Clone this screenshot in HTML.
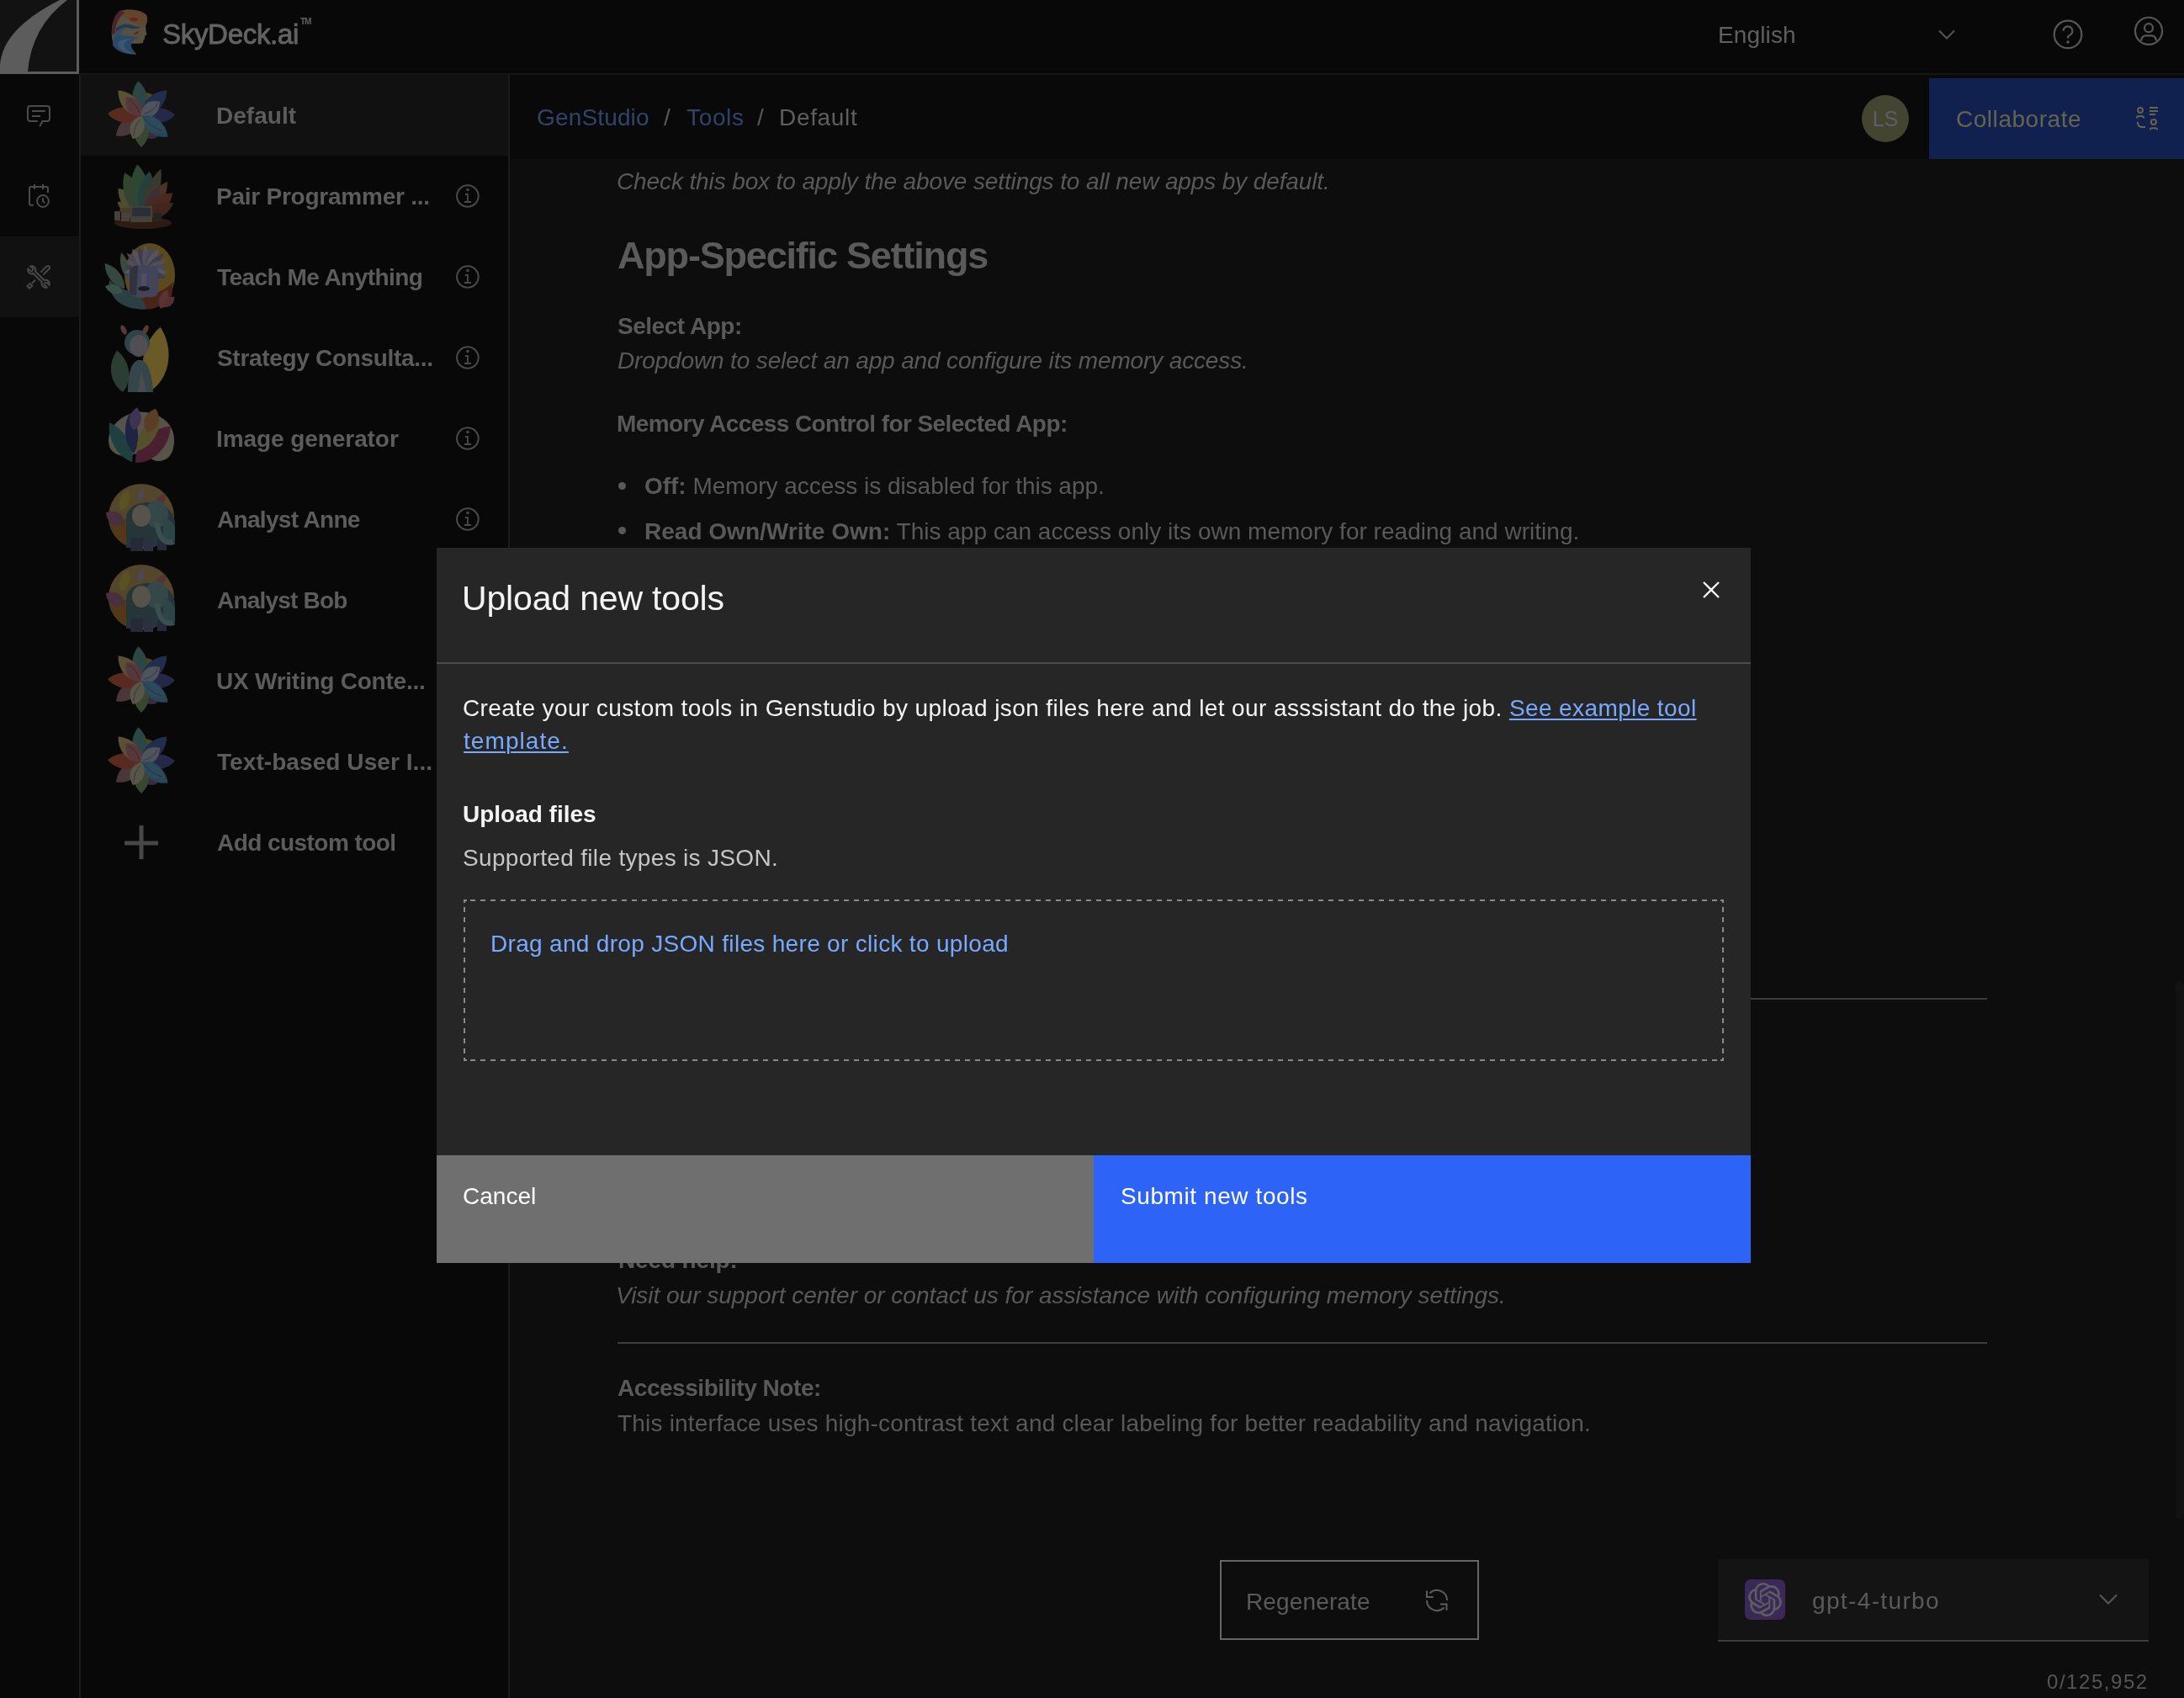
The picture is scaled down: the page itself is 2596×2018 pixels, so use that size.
<!DOCTYPE html>
<html><head><meta charset="utf-8">
<title>SkyDeck.ai - Upload new tools</title>
<style>
html,body{margin:0;padding:0;}
body{width:2596px;height:2018px;overflow:hidden;position:relative;background:#0d0d0d;font-family:"Liberation Sans",sans-serif;}
.a{position:absolute;}
.t{position:absolute;white-space:nowrap;z-index:5;will-change:transform;}
svg{position:absolute;overflow:visible;}
</style></head><body>
<!-- ===== header ===== -->
<div class="a" style="left:0;top:0;width:2596px;height:88px;background:#080808;"></div>
<div class="a" style="left:96px;top:87px;width:2500px;height:2px;background:#161616;z-index:2;"></div>
<!-- top-left box -->
<div class="a" style="left:0;top:0;width:91px;height:85px;background:#121212;border-right:3px solid #5c5c5c;border-bottom:3px solid #5c5c5c;"></div>
<svg style="left:0;top:0" width="94" height="88"><path d="M0,85 Q-3.3,37.6 71,0 L80,0 Q37.6,31.7 33,85 Z" fill="#5c5c5c"/></svg>
<!-- logo -->
<svg style="left:128px;top:8px" width="52" height="60" viewBox="0 0 52 60">
  <path d="M14,5 C24,2 40,3 46,10 C48,14 47,19 45,23 L45.5,28 L46.5,33 L44,35 L44,38 L42.5,40 L42,43 C38,44.5 33,44 28,44 C27,48 31,53 38,56 C26,58 13,54 8,46 C3,38 3,16 14,5 Z" fill="#57503e"/>
  <path d="M18,6 C28,3 40,4 46,10 C47.5,14 47,18 45,22 C41,21 35,21 29,18 C25,15 22,12 15,12 Z" fill="#65442e"/>
  <path d="M14,5 C8,10 4,20 5,33 L9,32 C9,22 12,13 21,6 Z" fill="#4a2428"/>
  <ellipse cx="31" cy="15" rx="5" ry="2" fill="#6a261a"/>
  <path d="M10,26 C16,19 26,20 32,23 C35,24 38,24 40,23 C36,27 30,27 24,25 C18,24 14,27 10,30 Z" fill="#1e3a58"/>
  <path d="M5,37 C8,28 16,26 22,26 C18,30 14,34 10,41 Z" fill="#3e4c5a"/>
  <path d="M6,41 C8,34 14,32 20,34 C26,35 32,36 38,36 C33,38 29,40 28,44 C28,50 32,54 38,56 C24,58 12,54 6,46 Z" fill="#2c4868"/>
  <path d="M12,44 C14,40 20,38 28,38 C22,40 18,44 20,48 C22,52 28,55 32,56 C22,56 14,52 12,44 Z" fill="#3a5870"/>
  <path d="M28,44 C34,43.5 40,44 44,44 L52,44 L52,60 L38,60 C34,56 27,50 28,44 Z" fill="#080808"/>
  <path d="M31,33 C33,30 35,29 37,29 C36,32 34,33 31,33 Z" fill="#6a1a1a"/>
</svg>
<!-- header right icons -->
<svg style="left:2304px;top:35px" width="20" height="12" viewBox="0 0 20 12"><path d="M1,1.5 L10,10.5 L19,1.5" fill="none" stroke="#555" stroke-width="2"/></svg>
<svg style="left:2440px;top:23px" width="36" height="36" viewBox="0 0 36 36">
  <g fill="none" stroke="#575757" stroke-width="2.2">
  <circle cx="18" cy="17.9" r="16.3"/>
  <path d="M12.6,13.8 A5.4,5.4 0 1 1 21.8,17.6 L18,20.5 L18,22.6"/>
  </g>
  <circle cx="18" cy="27" r="1.8" fill="#575757"/>
</svg>
<svg style="left:2536px;top:20px" width="36" height="36" viewBox="0 0 36 36">
  <g fill="none" stroke="#575757" stroke-width="2.2">
  <circle cx="18" cy="16.85" r="16.1"/>
  <circle cx="18" cy="13.2" r="5"/>
  <path d="M9,28.5 C9.5,24.5 11,22.3 14.5,22.3 L21.5,22.3 C25,22.3 26.5,24.5 27,28.5"/>
  </g>
</svg>

<!-- ===== left rail ===== -->
<div class="a" style="left:0;top:88px;width:94px;height:1930px;background:#080808;"></div>
<div class="a" style="left:0;top:281px;width:94px;height:96px;background:#111111;"></div>
<div class="a" style="left:94px;top:88px;width:2px;height:1930px;background:#1b1b1b;"></div>
<!-- chat icon -->
<svg style="left:32px;top:125px" width="29" height="27" viewBox="0 0 29 27">
  <g fill="none" stroke="#4b4b4b" stroke-width="2">
  <path d="M12.8,19 L4,19 Q1,19 1,16 L1,4 Q1,1 4,1 L24,1 Q27,1 27,4 L27,16 Q27,19 24,19 L18.5,19 L15.2,25.3"/>
  <path d="M6,6.9 L21.9,6.9 M6,12.9 L16,12.9"/>
  </g>
</svg>
<!-- calendar icon -->
<svg style="left:34px;top:219px" width="26" height="29" viewBox="0 0 26 29">
  <g fill="none" stroke="#4b4b4b" stroke-width="2">
  <path d="M5.9,24.7 L3,24.7 Q1,24.7 1,22.7 L1,5 Q1,3 3,3 L21,3 Q23,3 23,5 L23,10"/>
  <path d="M7,0 L7,6 M17,0 L17,6"/>
  <circle cx="17" cy="20" r="6.9"/>
  <path d="M17,16.3 L17,20.1 L19.1,22.2"/>
  </g>
</svg>
<!-- tools icon -->
<svg style="left:26px;top:309px" width="40" height="40" viewBox="0 0 40 40">
  <g fill="none" stroke="#474747" stroke-width="2">
  <path transform="translate(11.8,11.8) rotate(45)" d="M-4.15,-2 L-0.8,-2 A2,2 0 0 1 -0.8,2 L-4.15,2 A4.6,4.6 0 0 0 4.25,1.75 L19.05,1.75 A4.6,4.6 0 0 0 27.45,2 L24.1,2 A2,2 0 0 1 24.1,-2 L27.45,-2 A4.6,4.6 0 0 0 19.05,-1.75 L4.25,-1.75 A4.6,4.6 0 0 0 -4.15,-2 Z"/>
  <path d="M22.3,14.6 L29.4,7.5 A2.12,2.12 0 0 1 32.4,10.5 L25.3,17.6"/>
  <path d="M16.2,23.6 L12.0,27.8"/>
  <path d="M9.7,27.9 L12.3,30.5 L9.0,33.6 L6.5,31.0 Z"/>
  </g>
</svg>

<!-- ===== sidebar ===== -->
<div class="a" style="left:96px;top:88px;width:508px;height:1930px;background:#080808;"></div>
<div class="a" style="left:96px;top:88px;width:508px;height:97px;background:#111111;"></div>
<div class="a" style="left:604px;top:88px;width:2px;height:1930px;background:#1b1b1b;"></div>
<svg style="left:128px;top:97px" width="80" height="80" viewBox="0 0 80 80"><circle cx="44" cy="30" r="17" fill="#4e4420"/><circle cx="52" cy="56" r="12" fill="#3a2a3a"/><path d="M0,0 C12,-10.5 12,-29.4 0,-42 C-12,-29.4 -12,-10.5 0,0 Z" fill="#2c4644" transform="translate(40,41) rotate(-5)"/><path d="M0,0 C12,-10.75 12,-30.099999999999998 0,-43 C-12,-30.099999999999998 -12,-10.75 0,0 Z" fill="#222c4c" transform="translate(40,41) rotate(45)"/><path d="M0,0 C12,-10.0 12,-28.0 0,-40 C-12,-28.0 -12,-10.0 0,0 Z" fill="#262848" transform="translate(40,41) rotate(88)"/><path d="M0,0 C12,-10.0 12,-28.0 0,-40 C-12,-28.0 -12,-10.0 0,0 Z" fill="#274656" transform="translate(40,41) rotate(128)"/><path d="M0,0 C12,-9.25 12,-25.9 0,-37 C-12,-25.9 -12,-9.25 0,0 Z" fill="#36492f" transform="translate(40,41) rotate(180)"/><path d="M0,0 C12,-9.5 12,-26.599999999999998 0,-38 C-12,-26.599999999999998 -12,-9.5 0,0 Z" fill="#4a3838" transform="translate(40,41) rotate(232)"/><path d="M0,0 C12,-10.0 12,-28.0 0,-40 C-12,-28.0 -12,-10.0 0,0 Z" fill="#5a2a1e" transform="translate(40,41) rotate(274)"/><path d="M0,0 C12,-10.25 12,-28.7 0,-41 C-12,-28.7 -12,-10.25 0,0 Z" fill="#5a5034" transform="translate(40,41) rotate(318)"/><path d="M0,0 C11,-7.25 11,-20.299999999999997 0,-29 C-11,-20.299999999999997 -11,-7.25 0,0 Z" fill="#55383a" transform="translate(40,41) rotate(322)"/><path d="M0,0 C11,-7.0 11,-19.599999999999998 0,-28 C-11,-19.599999999999998 -11,-7.0 0,0 Z" fill="#4e535c" transform="translate(40,41) rotate(52)"/><path d="M0,0 C11,-8.5 11,-23.799999999999997 0,-34 C-11,-23.799999999999997 -11,-8.5 0,0 Z" fill="#2c4a5c" transform="translate(40,41) rotate(125)"/><path d="M0,0 C11,-7.25 11,-20.299999999999997 0,-29 C-11,-20.299999999999997 -11,-7.25 0,0 Z" fill="#57564a" transform="translate(40,41) rotate(200)"/><g fill="none" stroke="#1c1c1c" stroke-width="0.8" opacity="0.6"><path d="M0,-4 C3,-12 3,-20 0,-25" transform="translate(40,41) rotate(322)"/><path d="M0,-4 C3,-12 3,-20 0,-24" transform="translate(40,41) rotate(52)"/><path d="M0,-4 C3,-12 3,-20 0,-30" transform="translate(40,41) rotate(125)"/><path d="M0,-4 C3,-12 3,-20 0,-25" transform="translate(40,41) rotate(200)"/></g></svg>
<svg style="left:130px;top:193px" width="80" height="80" viewBox="0 0 80 80"><path d="M0,0 C10,-9.0 10,-25.2 0,-36 C-10,-25.2 -10,-9.0 0,0 Z" fill="#4e4a32" transform="translate(40,66) rotate(-58)"/><path d="M0,0 C12,-11.5 12,-32.199999999999996 0,-46 C-12,-32.199999999999996 -12,-11.5 0,0 Z" fill="#4e4c34" transform="translate(40,66) rotate(-40)"/><path d="M0,0 C14,-14.5 14,-40.599999999999994 0,-58 C-14,-40.599999999999994 -14,-14.5 0,0 Z" fill="#34452f" transform="translate(40,66) rotate(-22)"/><path d="M0,0 C15,-16.0 15,-44.8 0,-64 C-15,-44.8 -15,-16.0 0,0 Z" fill="#2e4634" transform="translate(40,66) rotate(-6)"/><path d="M0,0 C13,-14.0 13,-39.199999999999996 0,-56 C-13,-39.199999999999996 -13,-14.0 0,0 Z" fill="#24403a" transform="translate(40,66) rotate(8)"/><path d="M0,0 C10,-15.5 10,-43.4 0,-62 C-10,-43.4 -10,-15.5 0,0 Z" fill="#3a3830" transform="translate(40,66) rotate(20)"/><path d="M0,0 C11,-13.0 11,-36.4 0,-52 C-11,-36.4 -11,-13.0 0,0 Z" fill="#4a3224" transform="translate(40,66) rotate(34)"/><path d="M0,0 C9,-10.5 9,-29.4 0,-42 C-9,-29.4 -9,-10.5 0,0 Z" fill="#3e2e34" transform="translate(40,66) rotate(28)"/><path d="M0,0 C12,-11.5 12,-32.199999999999996 0,-46 C-12,-32.199999999999996 -12,-11.5 0,0 Z" fill="#4a2a20" transform="translate(40,66) rotate(50)"/><path d="M0,0 C11,-10.0 11,-28.0 0,-40 C-11,-28.0 -11,-10.0 0,0 Z" fill="#42261e" transform="translate(40,66) rotate(64)"/><path d="M0,0 C9,-7.5 9,-21.0 0,-30 C-9,-21.0 -9,-7.5 0,0 Z" fill="#4a3a26" transform="translate(40,66) rotate(-70)"/><ellipse cx="40" cy="72" rx="34" ry="7" fill="#2e1c14"/><rect x="25" y="52" width="26" height="19" fill="#44403a"/><rect x="27" y="54" width="22" height="10" fill="#2a2e38"/><rect x="6" y="58" width="7" height="11" fill="#44403a"/><rect x="14" y="60" width="10" height="10" fill="#46423c"/><rect x="53" y="60" width="9" height="10" fill="#242422"/></svg>
<svg style="left:128px;top:289px" width="80" height="80" viewBox="0 0 80 80"><ellipse cx="50" cy="38" rx="30" ry="38" fill="#5a4a1e"/><path d="M18,68 C34,84 60,82 76,64 L78,46 C64,60 40,68 18,68 Z" fill="#4a2418"/><path d="M2,44 C10,52 22,56 34,60 C40,64 44,70 46,78 C30,80 12,74 6,62 C2,56 1,50 2,44 Z" fill="#2a4042"/><path d="M0,0 C9,-9.5 9,-26.599999999999998 0,-38 C-9,-26.599999999999998 -9,-9.5 0,0 Z" fill="#34483e" transform="translate(20,54) rotate(-38)"/><path d="M0,0 C7,-5.5 7,-15.399999999999999 0,-22 C-7,-15.399999999999999 -7,-5.5 0,0 Z" fill="#3a5048" transform="translate(18,58) rotate(-72)"/><path d="M0,0 C6,-8.0 6,-22.4 0,-32 C-6,-22.4 -6,-8.0 0,0 Z" fill="#3a4a3e" transform="translate(24,42) rotate(-14)"/><path d="M0,0 C5,-6.5 5,-18.2 0,-26 C-5,-18.2 -5,-6.5 0,0 Z" fill="#4a4856" transform="translate(45,32) rotate(-112)"/><path d="M0,0 C5,-6.5 5,-18.2 0,-26 C-5,-18.2 -5,-6.5 0,0 Z" fill="#555462" transform="translate(45,32) rotate(-96)"/><path d="M0,0 C5,-6.5 5,-18.2 0,-26 C-5,-18.2 -5,-6.5 0,0 Z" fill="#3e3c4e" transform="translate(45,32) rotate(-80)"/><path d="M0,0 C5,-6.5 5,-18.2 0,-26 C-5,-18.2 -5,-6.5 0,0 Z" fill="#50505c" transform="translate(45,32) rotate(-64)"/><path d="M0,0 C5,-7.5 5,-21.0 0,-30 C-5,-21.0 -5,-7.5 0,0 Z" fill="#4a4856" transform="translate(45,32) rotate(-48)"/><path d="M0,0 C5,-7.5 5,-21.0 0,-30 C-5,-21.0 -5,-7.5 0,0 Z" fill="#555462" transform="translate(45,32) rotate(-32)"/><path d="M0,0 C5,-7.5 5,-21.0 0,-30 C-5,-21.0 -5,-7.5 0,0 Z" fill="#3e3c4e" transform="translate(45,32) rotate(-16)"/><path d="M0,0 C5,-7.5 5,-21.0 0,-30 C-5,-21.0 -5,-7.5 0,0 Z" fill="#50505c" transform="translate(45,32) rotate(0)"/><path d="M0,0 C5,-7.5 5,-21.0 0,-30 C-5,-21.0 -5,-7.5 0,0 Z" fill="#4a4856" transform="translate(45,32) rotate(16)"/><path d="M0,0 C5,-7.5 5,-21.0 0,-30 C-5,-21.0 -5,-7.5 0,0 Z" fill="#555462" transform="translate(45,32) rotate(32)"/><path d="M0,0 C5,-7.5 5,-21.0 0,-30 C-5,-21.0 -5,-7.5 0,0 Z" fill="#3e3c4e" transform="translate(45,32) rotate(48)"/><path d="M0,0 C5,-6.5 5,-18.2 0,-26 C-5,-18.2 -5,-6.5 0,0 Z" fill="#50505c" transform="translate(45,32) rotate(64)"/><path d="M0,0 C5,-6.5 5,-18.2 0,-26 C-5,-18.2 -5,-6.5 0,0 Z" fill="#4a4856" transform="translate(45,32) rotate(80)"/><path d="M0,0 C5,-6.5 5,-18.2 0,-26 C-5,-18.2 -5,-6.5 0,0 Z" fill="#555462" transform="translate(45,32) rotate(96)"/><path d="M0,0 C5,-6.5 5,-18.2 0,-26 C-5,-18.2 -5,-6.5 0,0 Z" fill="#3e3c4e" transform="translate(45,32) rotate(112)"/><path d="M26,32 C26,24 60,24 60,32 L60,56 C60,66 50,64 43,64 C36,64 26,66 26,56 Z" fill="#42445a"/><path d="M26,34 C26,28 34,26 36,27 L34,62 C28,62 26,60 26,56 Z" fill="#30323f"/><rect x="40" y="36" width="6" height="16" fill="#4e5060"/><ellipse cx="43" cy="54" rx="7" ry="3" fill="#1c1c26"/><path d="M0,0 C7,-6.0 7,-16.799999999999997 0,-24 C-7,-16.799999999999997 -7,-6.0 0,0 Z" fill="#5a3432" transform="translate(63,78) rotate(18)"/><path d="M0,0 C6,-4.5 6,-12.6 0,-18 C-6,-12.6 -6,-4.5 0,0 Z" fill="#553030" transform="translate(66,76) rotate(48)"/></svg>
<svg style="left:128px;top:384px" width="80" height="82" viewBox="0 0 80 82"><path d="M0,0 C20,-19.0 20,-53.199999999999996 0,-76 C-20,-53.199999999999996 -20,-19.0 0,0 Z" fill="#6a5a28" transform="translate(52,80) rotate(8)"/><path d="M0,0 C14,-12.5 14,-35.0 0,-50 C-14,-35.0 -14,-12.5 0,0 Z" fill="#2a3e34" transform="translate(18,82) rotate(-8)"/><path d="M24,82 C24,54 30,44 38,44 C46,44 52,54 54,82 Z" fill="#34464a"/><path d="M36,82 L40,56 L46,82 Z" fill="#484c50"/><circle cx="35" cy="23" r="15" fill="#2e4446"/><ellipse cx="37" cy="27" rx="11" ry="13" fill="#4e4e54"/><ellipse cx="19" cy="8" rx="3" ry="6" fill="#5a3a32" transform="rotate(-25 19 8)"/><ellipse cx="45" cy="8" rx="3" ry="6" fill="#5a3a32" transform="rotate(25 45 8)"/></svg>
<svg style="left:128px;top:481px" width="80" height="80" viewBox="0 0 80 80"><path d="M1,42 C1,25 20,8 40,8.5 C62,9 79,22 79,42 C79,58 72,67 60,67 C52,67 50,61 44,59 C38,58 32,58 27,60 C24,61 20,62 14,60 C4,57 1,50 1,42 Z" fill="#57534b"/><path d="M0,0 C12,-13.5 12,-37.8 0,-54 C-12,-37.8 -12,-13.5 0,0 Z" fill="#1e4040" transform="translate(29,68) rotate(-30)"/><path d="M0,0 C10,-12.0 10,-33.599999999999994 0,-48 C-10,-33.599999999999994 -10,-12.0 0,0 Z" fill="#1e2442" transform="translate(31,58) rotate(-6)"/><path d="M0,0 C9,-6.75 9,-18.9 0,-27 C-9,-18.9 -9,-6.75 0,0 Z" fill="#3e3452" transform="translate(31,30) rotate(8)"/><path d="M0,0 C16,-15.0 16,-42.0 0,-60 C-16,-42.0 -16,-15.0 0,0 Z" fill="#4a2030" transform="translate(33,69) rotate(44)"/><path d="M0,0 C11,-12.0 11,-33.599999999999994 0,-48 C-11,-33.599999999999994 -11,-12.0 0,0 Z" fill="#55502a" transform="translate(35,55) rotate(34)"/><path d="M0,0 C11,-7.5 11,-21.0 0,-30 C-11,-21.0 -11,-7.5 0,0 Z" fill="#5a3e24" transform="translate(47,33) rotate(20)"/></svg>
<svg style="left:128px;top:577px" width="80" height="80" viewBox="0 0 80 80"><defs><clipPath id="ec"><circle cx="40" cy="37" r="39"/></clipPath></defs><circle cx="40" cy="37" r="39" fill="#54462a"/><path d="M0,40 C2,60 14,74 34,78 L34,40 Z" fill="#533818" clip-path="url(#ec)"/><path d="M0,0 C8,-6.5 8,-18.2 0,-26 C-8,-18.2 -8,-6.5 0,0 Z" fill="#5a5226" transform="translate(16,30) rotate(18)"/><path d="M0,0 C10,-6.5 10,-18.2 0,-26 C-10,-18.2 -10,-6.5 0,0 Z" fill="#48303e" transform="translate(20,46) rotate(-58)"/><path d="M0,0 C5,-4.0 5,-11.2 0,-16 C-5,-11.2 -5,-4.0 0,0 Z" fill="#4a4850" transform="translate(38,19) rotate(10)"/><path d="M0,0 C6,-4.25 6,-11.899999999999999 0,-17 C-6,-11.899999999999999 -6,-4.25 0,0 Z" fill="#553432" transform="translate(58,23) rotate(40)"/><path d="M22,74 L22,40 C22,26 34,20 50,20 C66,20 80,30 80,46 L80,70 Z" fill="#263638"/><ellipse cx="58" cy="34" rx="14" ry="16" fill="#34484a"/><path d="M66,36 C72,40 78,44 80,50 L80,66 L66,66 Z" fill="#2e4446"/><rect x="27" y="62" width="15" height="16" fill="#262a38"/><rect x="43" y="64" width="11" height="14" fill="#2a3040"/><rect x="59" y="64" width="11" height="13" fill="#262a38"/><ellipse cx="40" cy="36" rx="11" ry="13" fill="#57524a"/><path d="M58,44 C60,54 62,62 68,66 C72,68 76,68 78,67" fill="none" stroke="#3a5050" stroke-width="6"/></svg>
<svg style="left:128px;top:673px" width="80" height="80" viewBox="0 0 80 80"><defs><clipPath id="ec2"><circle cx="40" cy="37" r="39"/></clipPath></defs><circle cx="40" cy="37" r="39" fill="#54462a"/><path d="M0,40 C2,60 14,74 34,78 L34,40 Z" fill="#533818" clip-path="url(#ec2)"/><path d="M0,0 C8,-6.5 8,-18.2 0,-26 C-8,-18.2 -8,-6.5 0,0 Z" fill="#5a5226" transform="translate(16,30) rotate(18)"/><path d="M0,0 C10,-6.5 10,-18.2 0,-26 C-10,-18.2 -10,-6.5 0,0 Z" fill="#48303e" transform="translate(20,46) rotate(-58)"/><path d="M0,0 C5,-4.0 5,-11.2 0,-16 C-5,-11.2 -5,-4.0 0,0 Z" fill="#4a4850" transform="translate(38,19) rotate(10)"/><path d="M0,0 C6,-4.25 6,-11.899999999999999 0,-17 C-6,-11.899999999999999 -6,-4.25 0,0 Z" fill="#553432" transform="translate(58,23) rotate(40)"/><path d="M22,74 L22,40 C22,26 34,20 50,20 C66,20 80,30 80,46 L80,70 Z" fill="#263638"/><ellipse cx="58" cy="34" rx="14" ry="16" fill="#34484a"/><path d="M66,36 C72,40 78,44 80,50 L80,66 L66,66 Z" fill="#2e4446"/><rect x="27" y="62" width="15" height="16" fill="#262a38"/><rect x="43" y="64" width="11" height="14" fill="#2a3040"/><rect x="59" y="64" width="11" height="13" fill="#262a38"/><ellipse cx="40" cy="36" rx="11" ry="13" fill="#57524a"/><path d="M58,44 C60,54 62,62 68,66 C72,68 76,68 78,67" fill="none" stroke="#3a5050" stroke-width="6"/></svg>
<svg style="left:128px;top:769px" width="80" height="80" viewBox="0 0 80 80"><circle cx="44" cy="30" r="17" fill="#4e4420"/><circle cx="52" cy="56" r="12" fill="#3a2a3a"/><path d="M0,0 C12,-10.5 12,-29.4 0,-42 C-12,-29.4 -12,-10.5 0,0 Z" fill="#2c4644" transform="translate(40,41) rotate(-5)"/><path d="M0,0 C12,-10.75 12,-30.099999999999998 0,-43 C-12,-30.099999999999998 -12,-10.75 0,0 Z" fill="#222c4c" transform="translate(40,41) rotate(45)"/><path d="M0,0 C12,-10.0 12,-28.0 0,-40 C-12,-28.0 -12,-10.0 0,0 Z" fill="#262848" transform="translate(40,41) rotate(88)"/><path d="M0,0 C12,-10.0 12,-28.0 0,-40 C-12,-28.0 -12,-10.0 0,0 Z" fill="#274656" transform="translate(40,41) rotate(128)"/><path d="M0,0 C12,-9.25 12,-25.9 0,-37 C-12,-25.9 -12,-9.25 0,0 Z" fill="#36492f" transform="translate(40,41) rotate(180)"/><path d="M0,0 C12,-9.5 12,-26.599999999999998 0,-38 C-12,-26.599999999999998 -12,-9.5 0,0 Z" fill="#4a3838" transform="translate(40,41) rotate(232)"/><path d="M0,0 C12,-10.0 12,-28.0 0,-40 C-12,-28.0 -12,-10.0 0,0 Z" fill="#5a2a1e" transform="translate(40,41) rotate(274)"/><path d="M0,0 C12,-10.25 12,-28.7 0,-41 C-12,-28.7 -12,-10.25 0,0 Z" fill="#5a5034" transform="translate(40,41) rotate(318)"/><path d="M0,0 C11,-7.25 11,-20.299999999999997 0,-29 C-11,-20.299999999999997 -11,-7.25 0,0 Z" fill="#55383a" transform="translate(40,41) rotate(322)"/><path d="M0,0 C11,-7.0 11,-19.599999999999998 0,-28 C-11,-19.599999999999998 -11,-7.0 0,0 Z" fill="#4e535c" transform="translate(40,41) rotate(52)"/><path d="M0,0 C11,-8.5 11,-23.799999999999997 0,-34 C-11,-23.799999999999997 -11,-8.5 0,0 Z" fill="#2c4a5c" transform="translate(40,41) rotate(125)"/><path d="M0,0 C11,-7.25 11,-20.299999999999997 0,-29 C-11,-20.299999999999997 -11,-7.25 0,0 Z" fill="#57564a" transform="translate(40,41) rotate(200)"/><g fill="none" stroke="#1c1c1c" stroke-width="0.8" opacity="0.6"><path d="M0,-4 C3,-12 3,-20 0,-25" transform="translate(40,41) rotate(322)"/><path d="M0,-4 C3,-12 3,-20 0,-24" transform="translate(40,41) rotate(52)"/><path d="M0,-4 C3,-12 3,-20 0,-30" transform="translate(40,41) rotate(125)"/><path d="M0,-4 C3,-12 3,-20 0,-25" transform="translate(40,41) rotate(200)"/></g></svg>
<svg style="left:128px;top:865px" width="80" height="80" viewBox="0 0 80 80"><circle cx="44" cy="30" r="17" fill="#4e4420"/><circle cx="52" cy="56" r="12" fill="#3a2a3a"/><path d="M0,0 C12,-10.5 12,-29.4 0,-42 C-12,-29.4 -12,-10.5 0,0 Z" fill="#2c4644" transform="translate(40,41) rotate(-5)"/><path d="M0,0 C12,-10.75 12,-30.099999999999998 0,-43 C-12,-30.099999999999998 -12,-10.75 0,0 Z" fill="#222c4c" transform="translate(40,41) rotate(45)"/><path d="M0,0 C12,-10.0 12,-28.0 0,-40 C-12,-28.0 -12,-10.0 0,0 Z" fill="#262848" transform="translate(40,41) rotate(88)"/><path d="M0,0 C12,-10.0 12,-28.0 0,-40 C-12,-28.0 -12,-10.0 0,0 Z" fill="#274656" transform="translate(40,41) rotate(128)"/><path d="M0,0 C12,-9.25 12,-25.9 0,-37 C-12,-25.9 -12,-9.25 0,0 Z" fill="#36492f" transform="translate(40,41) rotate(180)"/><path d="M0,0 C12,-9.5 12,-26.599999999999998 0,-38 C-12,-26.599999999999998 -12,-9.5 0,0 Z" fill="#4a3838" transform="translate(40,41) rotate(232)"/><path d="M0,0 C12,-10.0 12,-28.0 0,-40 C-12,-28.0 -12,-10.0 0,0 Z" fill="#5a2a1e" transform="translate(40,41) rotate(274)"/><path d="M0,0 C12,-10.25 12,-28.7 0,-41 C-12,-28.7 -12,-10.25 0,0 Z" fill="#5a5034" transform="translate(40,41) rotate(318)"/><path d="M0,0 C11,-7.25 11,-20.299999999999997 0,-29 C-11,-20.299999999999997 -11,-7.25 0,0 Z" fill="#55383a" transform="translate(40,41) rotate(322)"/><path d="M0,0 C11,-7.0 11,-19.599999999999998 0,-28 C-11,-19.599999999999998 -11,-7.0 0,0 Z" fill="#4e535c" transform="translate(40,41) rotate(52)"/><path d="M0,0 C11,-8.5 11,-23.799999999999997 0,-34 C-11,-23.799999999999997 -11,-8.5 0,0 Z" fill="#2c4a5c" transform="translate(40,41) rotate(125)"/><path d="M0,0 C11,-7.25 11,-20.299999999999997 0,-29 C-11,-20.299999999999997 -11,-7.25 0,0 Z" fill="#57564a" transform="translate(40,41) rotate(200)"/><g fill="none" stroke="#1c1c1c" stroke-width="0.8" opacity="0.6"><path d="M0,-4 C3,-12 3,-20 0,-25" transform="translate(40,41) rotate(322)"/><path d="M0,-4 C3,-12 3,-20 0,-24" transform="translate(40,41) rotate(52)"/><path d="M0,-4 C3,-12 3,-20 0,-30" transform="translate(40,41) rotate(125)"/><path d="M0,-4 C3,-12 3,-20 0,-25" transform="translate(40,41) rotate(200)"/></g></svg>
<!-- info icons -->
<svg style="left:541px;top:218px" width="30" height="420" viewBox="0 0 30 420">
  <g id="info">
    <circle cx="14.9" cy="15" r="12.8" fill="none" stroke="#4a4a4a" stroke-width="2"/>
    <path d="M12,13 L14.9,13 L14.9,22 M11,22 L19,22" fill="none" stroke="#4a4a4a" stroke-width="1.8"/>
    <circle cx="14.9" cy="7.5" r="1.7" fill="#4a4a4a"/>
  </g>
  <use href="#info" y="96"/><use href="#info" y="192"/><use href="#info" y="288"/><use href="#info" y="384"/>
</svg>
<!-- plus -->
<svg style="left:148px;top:981px" width="40" height="40" viewBox="0 0 40 40"><path d="M20,0 L20,40 M0,21 L40,21" stroke="#474747" stroke-width="5"/></svg>

<!-- ===== main ===== -->
<div class="a" style="left:606px;top:88px;width:1990px;height:101px;background:#090909;"></div>
<div class="a" style="left:606px;top:189px;width:1990px;height:1829px;background:#0d0d0d;"></div>
<!-- LS avatar -->
<div class="a" style="left:2213px;top:113px;width:56px;height:56px;border-radius:50%;background:#434530;"></div>
<div class="t" style="left:2213px;top:113px;width:56px;height:56px;line-height:56px;text-align:center;font-size:25px;color:#5f5e66;">LS</div>
<!-- collaborate -->
<div class="a" style="left:2293px;top:93px;width:303px;height:96px;background:#11214f;"></div>
<svg style="left:2537px;top:127px" width="30" height="30" viewBox="0 0 30 30">
  <g fill="none" stroke="#66634f" stroke-width="2">
    <circle cx="7" cy="3.9" r="2.9"/>
    <path d="M3,13.6 L3,13 C3,11.5 4,11 5.5,11 L8.5,11 C10,11 11,11.5 11,13 L11,13.6"/>
    <path d="M3.9,17.7 C3.9,21.5 6,24 9.5,24 L13,24"/>
    <path d="M18,1 L28,1 M18,5 L28,5 M18,9 L25,9"/>
    <circle cx="22.9" cy="17.9" r="3"/>
    <path d="M18.9,27.4 L18.9,27 C18.9,25.5 20,25.2 21.5,25.2 L24.5,25.2 C26,25.2 27,25.5 27,27 L27,27.4"/>
  </g>
</svg>
<!-- hr lines -->
<div class="a" style="left:734px;top:1186px;width:1628px;height:2px;background:#3c3c3c;"></div>
<div class="a" style="left:734px;top:1595px;width:1628px;height:2px;background:#3c3c3c;"></div>
<!-- bullets -->
<div class="a" style="left:735px;top:573px;width:9px;height:9px;border-radius:50%;background:#595959;"></div>
<div class="a" style="left:735px;top:626px;width:9px;height:9px;border-radius:50%;background:#595959;"></div>
<!-- scrollbar -->
<div class="a" style="left:2586px;top:1167px;width:10px;height:638px;border-radius:5px;background:#131313;"></div>
<!-- regenerate button -->
<div class="a" style="left:1450px;top:1854px;width:304px;height:91px;border:2px solid #666;"></div>
<svg style="left:1695px;top:1888px" width="27" height="28" viewBox="0 0 27 28">
  <g fill="none" stroke="#5c5c5c" stroke-width="2">
    <path d="M4.5,5.5 A12,12 0 0 1 25,14"/>
    <path d="M1,2.6 L1,10 L8.7,10"/>
    <path d="M1,14 A12,12 0 0 0 21.5,22.5"/>
    <path d="M24.5,26 L24.5,18.5 L17,18.5"/>
  </g>
</svg>
<!-- model dropdown -->
<div class="a" style="left:2042px;top:1853px;width:512px;height:96px;background:#141414;border-bottom:2px solid #3c3c3c;"></div>
<div class="a" style="left:2074px;top:1877px;width:48px;height:48px;border-radius:7px;background:#3a2958;"></div>
<svg style="left:2078px;top:1881px" width="40" height="40" viewBox="0 0 24 24"><g transform="scale(1.0)"><path fill="#5e5e5e" d="M22.2819 9.8211a5.9847 5.9847 0 0 0-.5157-4.9108 6.0462 6.0462 0 0 0-6.5098-2.9A6.0651 6.0651 0 0 0 4.9807 4.1818a5.9847 5.9847 0 0 0-3.9977 2.9 6.0462 6.0462 0 0 0 .7427 7.0966 5.98 5.98 0 0 0 .511 4.9107 6.051 6.051 0 0 0 6.5146 2.9001A5.9847 5.9847 0 0 0 13.2599 24a6.0557 6.0557 0 0 0 5.7718-4.2058 5.9894 5.9894 0 0 0 3.9977-2.9001 6.0557 6.0557 0 0 0-.7475-7.0729zm-9.022 12.6081a4.4755 4.4755 0 0 1-2.8764-1.0408l.1419-.0804 4.7783-2.7582a.7948.7948 0 0 0 .3927-.6813v-6.7369l2.02 1.1686a.071.071 0 0 1 .038.052v5.5826a4.504 4.504 0 0 1-4.4945 4.4944zm-9.6607-4.1254a4.4708 4.4708 0 0 1-.5346-3.0137l.142.0852 4.783 2.7582a.7712.7712 0 0 0 .7806 0l5.8428-3.3685v2.3324a.0804.0804 0 0 1-.0332.0615L9.74 19.9502a4.4992 4.4992 0 0 1-6.1408-1.6464zM2.3408 7.8956a4.485 4.485 0 0 1 2.3655-1.9728V11.6a.7664.7664 0 0 0 .3879.6765l5.8144 3.3543-2.0201 1.1685a.0757.0757 0 0 1-.071 0l-4.8303-2.7865A4.504 4.504 0 0 1 2.3408 7.872zm16.5963 3.8558L13.1038 8.364 15.1192 7.2a.0757.0757 0 0 1 .071 0l4.8303 2.7913a4.4944 4.4944 0 0 1-.6765 8.1042v-5.6772a.79.79 0 0 0-.407-.667zm2.0107-3.0231l-.142-.0852-4.7735-2.7818a.7759.7759 0 0 0-.7854 0L9.409 9.2297V6.8974a.0662.0662 0 0 1 .0284-.0615l4.8303-2.7866a4.4992 4.4992 0 0 1 6.6802 4.66zM8.3065 12.863l-2.02-1.1638a.0804.0804 0 0 1-.038-.0567V6.0742a4.4992 4.4992 0 0 1 7.3757-3.4537l-.142.0805L8.704 5.459a.7948.7948 0 0 0-.3927.6813zm1.0976-2.3654l2.602-1.4998 2.6069 1.4998v2.9994l-2.5974 1.4997-2.6067-1.4997Z"/></g></svg>
<svg style="left:2495px;top:1894px" width="22" height="14" viewBox="0 0 22 14"><path d="M1,1.5 L11,11.5 L21,1.5" fill="none" stroke="#575757" stroke-width="2"/></svg>

<!-- ===== modal ===== -->
<div class="a" style="left:519px;top:651px;width:1562px;height:850px;background:#262626;z-index:10;"></div>
<div class="a" style="left:519px;top:787px;width:1562px;height:2px;background:#4c4c4c;z-index:11;"></div>
<svg style="left:2024px;top:691px;z-index:12" width="20" height="20" viewBox="0 0 20 20"><path d="M1,1 L19,19 M19,1 L1,19" stroke="#f4f4f4" stroke-width="2.4"/></svg>
<svg style="left:0;top:0;z-index:11" width="2596" height="2018" viewBox="0 0 2596 2018">
  <g fill="none" stroke="#8a8a8a" stroke-width="2">
    <path d="M559,1070 H2041 M559,1260 H2041" stroke-dasharray="6 6"/>
    <path d="M552,1078 V1252 M2048,1078 V1252" stroke-dasharray="6 6"/>
    <path d="M555,1070 H552 V1073 M2045,1070 H2048 V1073 M555,1260 H552 V1257 M2045,1260 H2048 V1257"/>
  </g>
</svg>
<div class="a" style="left:519px;top:1373px;width:781px;height:128px;background:#6f6f6f;z-index:11;"></div>
<div class="a" style="left:1300px;top:1373px;width:781px;height:128px;background:#2d63f6;z-index:11;"></div>

<div class="t" style="left:193.00px;top:20.50px;font-size:33px;line-height:40px;letter-spacing:-0.302px;color:#636363;-webkit-text-stroke:0.9px #636363">SkyDeck.ai</div>
<div class="t" style="left:357.00px;top:19.50px;font-size:10px;line-height:12px;letter-spacing:-1.108px;color:#636363;"><span style="font-weight:bold;">TM</span></div>
<div class="t" style="left:2042.00px;top:24.50px;font-size:28px;line-height:34px;letter-spacing:0.123px;color:#5f5f5f;">English</div>
<div class="t" style="left:638.00px;top:122.50px;font-size:28px;line-height:34px;letter-spacing:0.157px;color:#304469;">GenStudio</div>
<div class="t" style="left:789.00px;top:122.50px;font-size:28px;line-height:34px;letter-spacing:0.000px;color:#595959;">/</div>
<div class="t" style="left:816.00px;top:122.50px;font-size:28px;line-height:34px;letter-spacing:0.659px;color:#304469;">Tools</div>
<div class="t" style="left:900.00px;top:122.50px;font-size:28px;line-height:34px;letter-spacing:0.000px;color:#595959;">/</div>
<div class="t" style="left:926.00px;top:122.50px;font-size:28px;line-height:34px;letter-spacing:0.677px;color:#5f5f5f;">Default</div>
<div class="t" style="left:2325.00px;top:124.50px;font-size:28px;line-height:34px;letter-spacing:0.537px;color:#66634f;">Collaborate</div>
<div class="t" style="left:256.70px;top:120.50px;font-size:28px;line-height:34px;letter-spacing:0.021px;color:#5c5c5c;"><span style="font-weight:bold;">Default</span></div>
<div class="t" style="left:256.70px;top:216.50px;font-size:28px;line-height:34px;letter-spacing:-0.236px;color:#5c5c5c;"><span style="font-weight:bold;">Pair Programmer ...</span></div>
<div class="t" style="left:257.70px;top:312.50px;font-size:28px;line-height:34px;letter-spacing:-0.538px;color:#5c5c5c;"><span style="font-weight:bold;">Teach Me Anything</span></div>
<div class="t" style="left:257.70px;top:408.50px;font-size:28px;line-height:34px;letter-spacing:-0.308px;color:#5c5c5c;"><span style="font-weight:bold;">Strategy Consulta...</span></div>
<div class="t" style="left:256.70px;top:504.50px;font-size:28px;line-height:34px;letter-spacing:-0.075px;color:#5c5c5c;"><span style="font-weight:bold;">Image generator</span></div>
<div class="t" style="left:257.70px;top:600.50px;font-size:28px;line-height:34px;letter-spacing:-0.677px;color:#5c5c5c;"><span style="font-weight:bold;">Analyst Anne</span></div>
<div class="t" style="left:257.70px;top:696.50px;font-size:28px;line-height:34px;letter-spacing:-0.795px;color:#5c5c5c;"><span style="font-weight:bold;">Analyst Bob</span></div>
<div class="t" style="left:256.70px;top:792.50px;font-size:28px;line-height:34px;letter-spacing:-0.236px;color:#5c5c5c;"><span style="font-weight:bold;">UX Writing Conte...</span></div>
<div class="t" style="left:257.70px;top:888.50px;font-size:28px;line-height:34px;letter-spacing:0.074px;color:#5c5c5c;"><span style="font-weight:bold;">Text-based User I...</span></div>
<div class="t" style="left:257.70px;top:984.50px;font-size:28px;line-height:34px;letter-spacing:-0.556px;color:#5c5c5c;"><span style="font-weight:bold;">Add custom tool</span></div>
<div class="t" style="left:733.00px;top:198.50px;font-size:28px;line-height:34px;letter-spacing:-0.120px;color:#595959;"><span style="font-style:italic;">Check this box to apply the above settings to all new apps by default.</span></div>
<div class="t" style="left:733.80px;top:276.70px;font-size:45px;line-height:54px;letter-spacing:-1.191px;color:#5a5a5a;"><span style="font-weight:bold;">App-Specific Settings</span></div>
<div class="t" style="left:734.00px;top:370.50px;font-size:28px;line-height:34px;letter-spacing:-0.470px;color:#595959;"><span style="font-weight:bold;">Select App:</span></div>
<div class="t" style="left:734.00px;top:412.00px;font-size:28px;line-height:34px;letter-spacing:-0.143px;color:#595959;"><span style="font-style:italic;">Dropdown to select an app and configure its memory access.</span></div>
<div class="t" style="left:733.00px;top:486.50px;font-size:28px;line-height:34px;letter-spacing:-0.574px;color:#595959;"><span style="font-weight:bold;">Memory Access Control for Selected App:</span></div>
<div class="t" style="left:766.00px;top:560.50px;font-size:28px;line-height:34px;letter-spacing:-0.022px;color:#595959;"><span style="font-weight:bold;">Off:</span> Memory access is disabled for this app.</div>
<div class="t" style="left:766.00px;top:614.50px;font-size:28px;line-height:34px;letter-spacing:0.015px;color:#595959;"><span style="font-weight:bold;">Read Own/Write Own:</span> This app can access only its own memory for reading and writing.</div>
<div class="t" style="left:734.50px;top:1480.50px;font-size:28px;line-height:34px;letter-spacing:-0.145px;color:#595959;"><span style="font-weight:bold;">Need help:</span></div>
<div class="t" style="left:732.00px;top:1523.00px;font-size:28px;line-height:34px;letter-spacing:-0.018px;color:#595959;"><span style="font-style:italic;">Visit our support center or contact us for assistance with configuring memory settings.</span></div>
<div class="t" style="left:734.00px;top:1632.50px;font-size:28px;line-height:34px;letter-spacing:-0.456px;color:#595959;"><span style="font-weight:bold;">Accessibility Note:</span></div>
<div class="t" style="left:734.00px;top:1674.50px;font-size:28px;line-height:34px;letter-spacing:0.200px;color:#595959;">This interface uses high-contrast text and clear labeling for better readability and navigation.</div>
<div class="t" style="left:1481.00px;top:1886.50px;font-size:28px;line-height:34px;letter-spacing:0.138px;color:#5a5a5a;">Regenerate</div>
<div class="t" style="left:2153.60px;top:1885.50px;font-size:28px;line-height:34px;letter-spacing:1.361px;color:#5a5a5a;">gpt-4-turbo</div>
<div class="t" style="left:2432.50px;top:1984.00px;font-size:24px;line-height:29px;letter-spacing:1.547px;color:#555555;">0/125,952</div>
<div class="t" style="left:548.50px;top:686.50px;font-size:41px;line-height:49px;letter-spacing:-0.168px;color:#f4f4f4;z-index:20">Upload new tools</div>
<div class="t" style="left:550.00px;top:824.50px;font-size:28px;line-height:34px;letter-spacing:0.396px;color:#f4f4f4;z-index:20">Create your custom tools in Genstudio by upload json files here and let our asssistant do the job. <span style="color:#78a9ff;text-decoration:underline;text-decoration-thickness:2px;text-underline-offset:3px;">See example tool</span></div>
<div class="t" style="left:551.00px;top:863.50px;font-size:28px;line-height:34px;letter-spacing:1.076px;color:#78a9ff;z-index:20"><span style="color:#78a9ff;text-decoration:underline;text-decoration-thickness:2px;text-underline-offset:3px;">template.</span></div>
<div class="t" style="left:550.00px;top:950.50px;font-size:28px;line-height:34px;letter-spacing:-0.011px;color:#f4f4f4;z-index:20"><span style="font-weight:bold;">Upload files</span></div>
<div class="t" style="left:550.00px;top:1002.50px;font-size:28px;line-height:34px;letter-spacing:0.323px;color:#c6c6c6;z-index:20">Supported file types is JSON.</div>
<div class="t" style="left:583.00px;top:1104.50px;font-size:28px;line-height:34px;letter-spacing:0.316px;color:#78a9ff;z-index:20">Drag and drop JSON files here or click to upload</div>
<div class="t" style="left:550.00px;top:1404.50px;font-size:28px;line-height:34px;letter-spacing:0.013px;color:#ffffff;z-index:20">Cancel</div>
<div class="t" style="left:1332.00px;top:1404.50px;font-size:28px;line-height:34px;letter-spacing:0.586px;color:#ffffff;z-index:20">Submit new tools</div>
</body></html>
